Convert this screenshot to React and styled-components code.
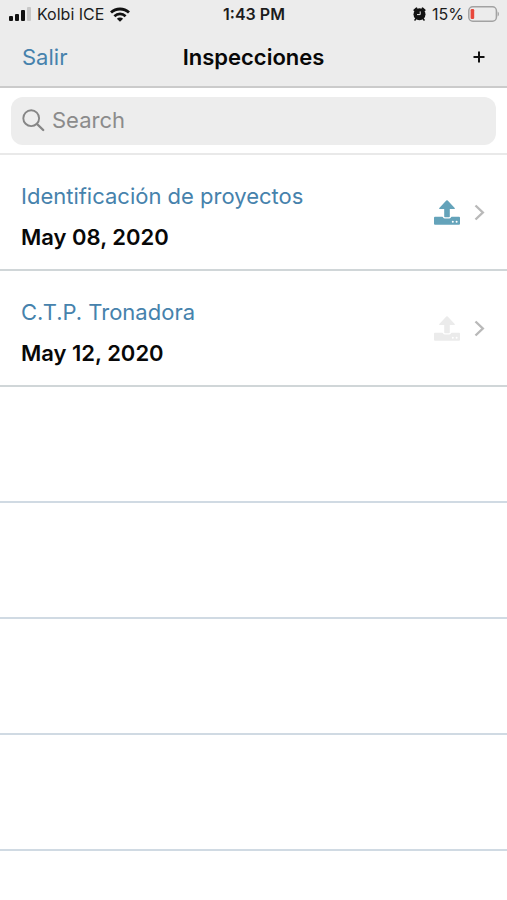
import React from 'react'
import styled, { createGlobalStyle } from 'styled-components'

const inspections = [
  { id: 1, name: 'Identificación de proyectos', date: 'May 08, 2020', pending: true },
  { id: 2, name: 'C.T.P. Tronadora', date: 'May 12, 2020', pending: false },
]

const EMPTY_ROWS = 4

const SignalIcon = () => (
  <svg width="22" height="14" viewBox="0 0 22 14" aria-hidden="true">
    <rect x="0" y="9" width="4" height="5" rx="1" fill="#111" />
    <rect x="6" y="7" width="4" height="7" rx="1" fill="#111" />
    <rect x="12" y="3" width="4" height="11" rx="1" fill="#111" />
    <rect x="18" y="0" width="4" height="14" rx="1" fill="#c8c8c8" />
  </svg>
)

const WifiIcon = () => (
  <svg width="20" height="15" viewBox="0 0 20 15" fill="none" stroke="#111" aria-hidden="true">
    <path d="M1 5.6a13 13 0 0 1 18 0" strokeWidth="2.8" />
    <path d="M4.4 9.2a8 8 0 0 1 11.2 0" strokeWidth="2.6" />
    <path d="M10 14.8 6.9 11.7a4.4 4.4 0 0 1 6.2 0z" fill="#111" stroke="none" />
  </svg>
)

const AlarmIcon = () => (
  <svg width="13" height="14" viewBox="0 0 13 14" aria-hidden="true">
    <circle cx="6.5" cy="7.2" r="6" fill="#111" />
    <path d="M1.4 3.2 3.4 1.4M11.6 3.2 9.6 1.4" stroke="#111" strokeWidth="2" strokeLinecap="round" />
    <path d="M3 11.6 2 13M10 11.6l1 1.4" stroke="#111" strokeWidth="1.6" strokeLinecap="round" />
    <path d="M7.2 4.4v3.2H4" fill="none" stroke="#ececec" />
  </svg>
)

const BatteryIcon = () => (
  <svg width="31" height="16" viewBox="0 0 31 16" aria-hidden="true">
    <rect x="0.8" y="0.8" width="27.6" height="14.4" rx="4" fill="none" stroke="#a2a2a2" strokeWidth="1.5" />
    <path d="M29.6 5.5c1.8.8 1.8 4.2 0 5z" fill="#a2a2a2" />
    <rect x="2.6" y="3" width="3.6" height="10" rx="1.2" fill="#e8483c" />
  </svg>
)

const SearchIcon = () => (
  <svg width="23" height="23" viewBox="0 0 23 23" fill="none" stroke="#868686" aria-hidden="true">
    <circle cx="9.2" cy="9.2" r="7.9" strokeWidth="1.9" />
    <path d="M15 15l6.2 6" strokeWidth="2.4" strokeLinecap="round" />
  </svg>
)

const UploadIcon = ({ color }) => (
  <svg width="26" height="25" viewBox="0 0 26 25" aria-hidden="true">
    <path
      fill={color}
      d="M1 16.8h7.2c1 0 1 1.8 2.6 1.8h4.4c1.6 0 1.6-1.8 2.6-1.8H25q1 0 1 1v6q0 1-1 1H1q-1 0-1-1v-6q0-1 1-1z"
    />
    <path fill={color} d="M12.3.6q.7-.7 1.4 0l7 7.3q.7 1-.5 1.2h-4.4v7.4q0 .8-.8.8h-4q-.8 0-.8-.8V9.1H5.8q-1.200-.2-.5-1.200z" />
    <circle cx="18.8" cy="21.8" r="1" fill="#fff" />
    <circle cx="22.6" cy="21.8" r="1" fill="#fff" />
  </svg>
)

const ChevronIcon = () => (
  <svg width="11" height="17" viewBox="0 0 11 17" fill="none" stroke="#b9b9b9" strokeWidth="2.4" aria-hidden="true">
    <path d="M1.5 1.5l7.3 7-7.3 7" />
  </svg>
)

const PlusIcon = () => (
  <svg width="12" height="12" viewBox="0 0 12 12" stroke="#111" strokeWidth="2" aria-hidden="true">
    <path d="M6 0.5v11M0.5 6h11" />
  </svg>
)

export default function App() {
  return (
    <>
      <GlobalStyle />
      <Header>
        <StatusBar>
          <StatusGroup>
            <SignalIcon />
            <Carrier>Kolbi ICE</Carrier>
            <WifiIcon />
          </StatusGroup>
          <Clock>1:43 PM</Clock>
          <StatusGroup $end>
            <AlarmIcon />
            <Battery>
              15%
              <BatteryIcon />
            </Battery>
          </StatusGroup>
        </StatusBar>
        <NavBar>
          <NavButton type="button">Salir</NavButton>
          <Title>Inspecciones</Title>
          <NavButton type="button" $end aria-label="Agregar"><PlusIcon /></NavButton>
        </NavBar>
      </Header>
      <SearchBar>
        <SearchField>
          <SearchIcon />
          <SearchInput type="search" placeholder="Search" aria-label="Search" />
        </SearchField>
      </SearchBar>
      <List>
        {inspections.map(v => (
          <Row key={v.id}>
            <RowLink href={`#inspection-${v.id}`}>
              <RowText>
                <Name>{v.name}</Name>
                <DateText>{v.date}</DateText>
              </RowText>
              <UploadIcon color={v.pending ? '#64a3ba' : '#ebebeb'} />
              <ChevronIcon />
            </RowLink>
          </Row>
        ))}
        {Array.from({ length: EMPTY_ROWS }, (_, i) => <Row key={`empty${i}`} $empty aria-hidden="true" />)}
      </List>
    </>
  )
}

const GlobalStyle = createGlobalStyle`
  * {
    box-sizing: border-box;
  }
  body {
    margin: 0;
    background: #fff;
    color: #080808;
    font-family: Inter, "Liberation Sans", sans-serif;
  }
  svg {
    display: block;
    flex: none;
  }
`

const Header = styled.header`
  background: #ececec;
  border-bottom: 2px solid #cbcbcb;
`

const StatusBar = styled.div`
  display: grid;
  grid-template-columns: 1fr auto 1fr;
  align-items: center;
  height: 28px;
  padding: 0 8px 0 9px;
  font-size: 16px;
  line-height: 20px;
  color: #1c1c1c;
`

const StatusGroup = styled.div`
  display: flex;
  align-items: center;
  gap: 6px;
  justify-content: ${p => p.$end ? 'flex-end' : 'flex-start'};
`

const Carrier = styled.span`
  white-space: nowrap;
`

const Clock = styled.span`
  font-weight: 600;
`

const Battery = styled.span`
  display: flex;
  align-items: center;
  gap: 4px;
`

const NavBar = styled.nav`
  display: grid;
  grid-template-columns: 1fr auto 1fr;
  align-items: center;
  height: 58px;
  padding: 0 22px;
`

const NavButton = styled.button`
  justify-self: ${p => p.$end ? 'end' : 'start'};
  padding: 0;
  border: 0;
  background: none;
  color: #4682ac;
  font-family: inherit;
  font-size: 22px;
  line-height: 28px;
  cursor: pointer;
`

const Title = styled.h1`
  margin: 0;
  font-size: 22px;
  line-height: 28px;
  font-weight: 600;
`

const SearchBar = styled.div`
  padding: 9px 11px 8px;
  border-bottom: 2px solid #e9e9e9;
`

const SearchField = styled.label`
  display: flex;
  align-items: center;
  gap: 7px;
  height: 48px;
  padding: 0 11px 2px;
  border-radius: 12px;
  background: #ededed;
`

const SearchInput = styled.input`
  flex: 1;
  min-width: 0;
  padding: 0;
  border: 0;
  outline: 0;
  background: none;
  color: #080808;
  font-family: inherit;
  font-size: 22px;
  line-height: 28px;
  appearance: none;
  &::placeholder {
    color: #8b8b8b;
    opacity: 1;
  }
`

const List = styled.ul`
  margin: 0;
  padding: 0;
  list-style: none;
`

const Row = styled.li`
  height: 116px;
  border-bottom: 2px solid ${p => p.$empty ? '#d0dae3' : '#d0d6d8'};
`

const RowLink = styled.a`
  display: flex;
  align-items: center;
  gap: 14px;
  height: 100%;
  padding: 0 22px 0 21px;
  color: inherit;
  text-decoration: none;
`

const RowText = styled.div`
  display: flex;
  flex-direction: column;
  flex: 1;
  gap: 13px;
  min-width: 0;
  padding-top: 8px;
  font-size: 22px;
  line-height: 28px;
`

const Name = styled.span`
  color: #4682ac;
`

const DateText = styled.span`
  font-weight: 600;
`
